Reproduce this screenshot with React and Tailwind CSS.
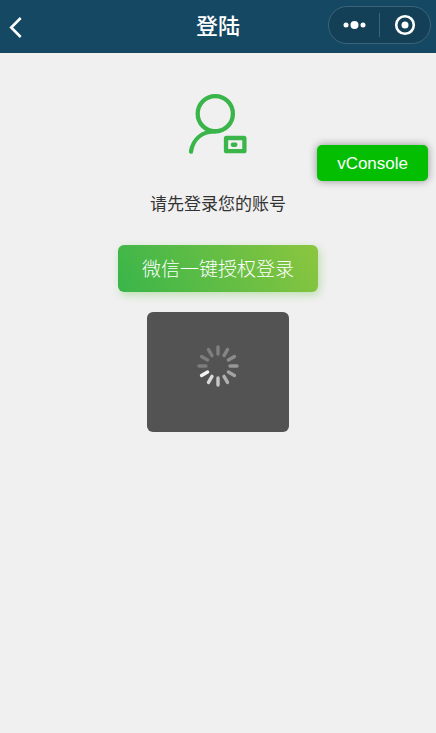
import React from "react";

const SPOKES = [
  { angle: 0, color: "#808080" },
  { angle: 30, color: "#858585" },
  { angle: 60, color: "#8c8c8c" },
  { angle: 90, color: "#979797" },
  { angle: 120, color: "#a3a3a3" },
  { angle: 150, color: "#b2b2b2" },
  { angle: 180, color: "#c6c6c6" },
  { angle: 210, color: "#dadada" },
  { angle: 240, color: "#f4f4f4" },
  { angle: 270, color: "#7c7c7c" },
  { angle: 300, color: "#7c7c7c" },
  { angle: 330, color: "#7e7e7e" },
];

function Header() {
  return (
    <header className="grid h-[53px] grid-cols-[1fr_auto_1fr] items-center bg-[#154863] px-[5px] text-white">
      <button type="button" aria-label="返回" className="justify-self-start pl-1">
        <svg width="16" height="24" viewBox="0 0 16 24" fill="none" stroke="currentColor" strokeWidth="2.6" aria-hidden="true">
          <path d="M11.7 3 2.2 12.5l9.5 9.5" />
        </svg>
      </button>
      <h1 className="text-[22px] leading-8 font-medium">登陆</h1>
      <div className="mb-1 flex h-[38px] w-[103px] items-center justify-self-end rounded-full border border-[#3c647a] bg-[#133f57]">
        <button type="button" aria-label="更多" className="flex flex-1 justify-center">
          <svg width="24" height="10" viewBox="0 0 24 10" fill="currentColor" aria-hidden="true">
            <circle cx="4" cy="5" r="2.5" />
            <circle cx="12.5" cy="5" r="4" />
            <circle cx="21" cy="5" r="2.5" />
          </svg>
        </button>
        <span className="h-6 w-px bg-[#3c647a]" />
        <button type="button" aria-label="关闭" className="flex flex-1 justify-center">
          <svg width="22" height="22" viewBox="0 0 22 22" aria-hidden="true">
            <circle cx="11" cy="11" r="8.8" fill="none" stroke="currentColor" strokeWidth="2.6" />
            <circle cx="11" cy="11" r="3.5" fill="currentColor" />
          </svg>
        </button>
      </div>
    </header>
  );
}

function UserIcon() {
  return (
    <svg width="60" height="62" viewBox="0 0 60 62" fill="none" stroke="#39b54a" strokeWidth="4.3" aria-hidden="true">
      <circle cx="27.3" cy="20.7" r="17.6" />
      <path d="M28 38.2C14 38.5 5 46 3 58.6" strokeLinecap="round" />
      <rect x="38" y="45" width="18.4" height="13.2" rx="0.5" />
      <rect x="42.8" y="49.5" width="6.6" height="4.4" rx="1.8" fill="#39b54a" stroke="none" />
    </svg>
  );
}

function LoadingToast() {
  return (
    <div role="status" aria-label="加载中" className="mt-5 flex h-[120px] w-[142px] justify-center rounded-md bg-[#535353] pt-8">
      <svg width="44" height="44" viewBox="-22 -22 44 44" aria-hidden="true">
        {SPOKES.map(({ angle, color }) => (
          <line
            key={angle}
            x1="0"
            y1="-12"
            x2="0"
            y2="-19"
            stroke={color}
            strokeWidth="3.4"
            strokeLinecap="round"
            transform={`rotate(${angle})`}
          />
        ))}
      </svg>
    </div>
  );
}

export default function App() {
  return (
    <div className="relative min-h-screen bg-[#f0f0f0] font-['Liberation_Sans','Noto_Sans_CJK_SC',sans-serif]">
      <Header />
      <main className="flex flex-col items-center pt-10">
        <UserIcon />
        <p className="mt-[38px] text-[17px] leading-6 text-[#333]">请先登录您的账号</p>
        <button
          type="button"
          className="mt-7 h-[47px] rounded-md bg-linear-[60deg,#39b54a,#8cc63f] px-6 pt-1 text-[19px] font-light text-white shadow-[2px_3px_8px_rgba(110,200,80,0.4)]"
        >
          微信一键授权登录
        </button>
        <LoadingToast />
      </main>
      <button
        type="button"
        className="absolute top-[145px] right-2 h-9 rounded-[5px] bg-[#04be02] px-5 pt-0.5 text-[17px] text-white shadow-[0_0_8px_rgba(0,0,0,0.4)]"
      >
        vConsole
      </button>
    </div>
  );
}
